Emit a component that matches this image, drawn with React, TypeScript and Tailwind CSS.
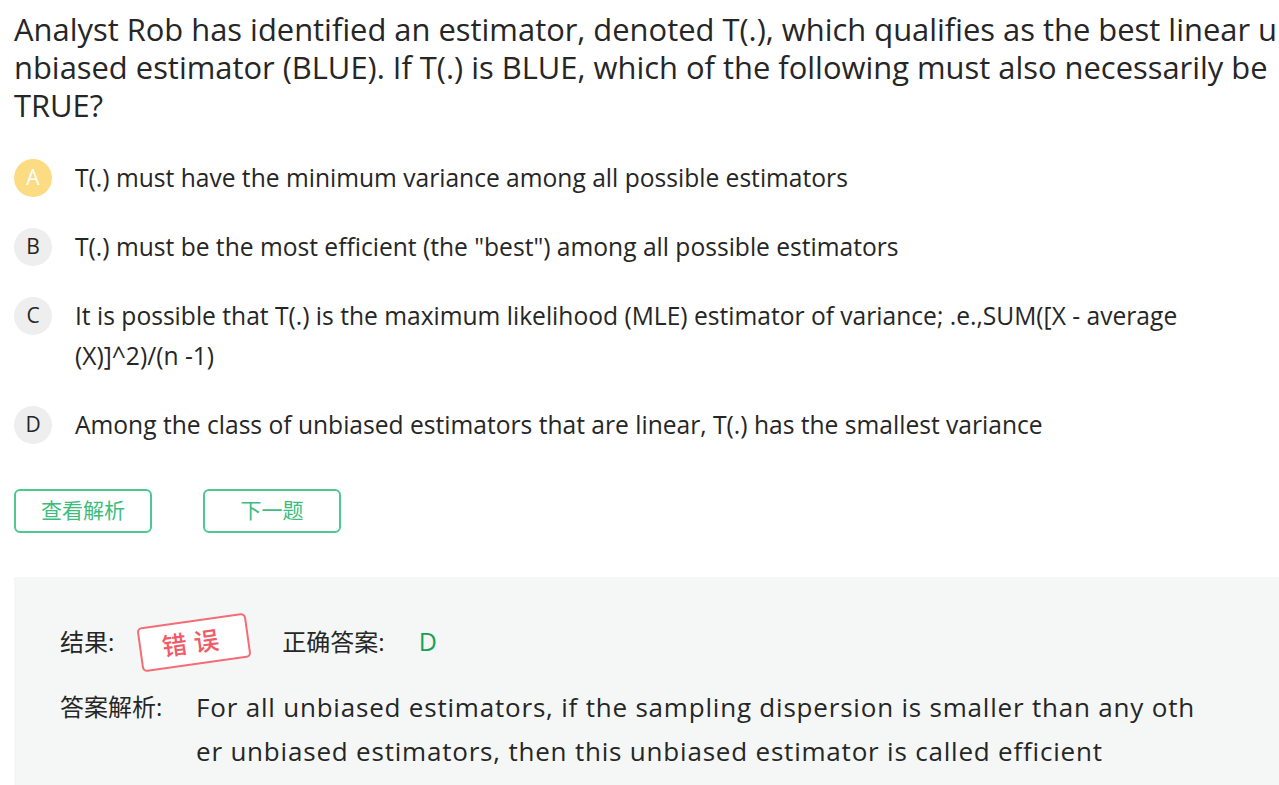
import React from 'react';

type Option = { key: string; text: string };

const options: Option[] = [
  { key: 'A', text: 'T(.) must have the minimum variance among all possible estimators' },
  { key: 'B', text: 'T(.) must be the most efficient (the "best") among all possible estimators' },
  {
    key: 'C',
    text: 'It is possible that T(.) is the maximum likelihood (MLE) estimator of variance; .e.,SUM([X - average (X)]^2)/(n -1)',
  },
  { key: 'D', text: 'Among the class of unbiased estimators that are linear, T(.) has the smallest variance' },
];

const selected = 'A';

const App: React.FC = () => {
  return (
    <div
      className="min-h-screen bg-white pl-[14px] text-[#262626] overflow-hidden"
      style={{ fontFamily: '"Open Sans", "Noto Sans CJK SC", sans-serif' }}
    >
      {/* Question */}
      <h1 className="pt-[10px] text-[30.9px] leading-[38px] font-normal break-all">
        Analyst Rob has identified an estimator, denoted T(.), which qualifies as the best linear unbiased
        estimator (BLUE). If T(.) is BLUE, which of the following must also necessarily be TRUE?
      </h1>

      {/* Options */}
      <ul className="mt-[34px] flex flex-col gap-[29px]">
        {options.map((opt) => (
          <li key={opt.key} className="flex items-start">
            <span
              className={`mt-px flex h-[38px] w-[38px] shrink-0 items-center justify-center rounded-full text-[21px] ${
                opt.key === selected ? 'bg-[#fcdc83] text-white' : 'bg-[#eeeeee] text-[#262626]'
              }`}
            >
              {opt.key}
            </span>
            <p className="ml-[23px] pr-[80px] text-[24.6px] leading-[40px]">{opt.text}</p>
          </li>
        ))}
      </ul>

      {/* Actions */}
      <div className="mt-[44px] flex gap-[51px]">
        <button className="h-[44px] w-[138px] rounded-[6px] border-2 border-[#4cc98f] text-[21px] text-[#3dbd7d]">
          查看解析
        </button>
        <button className="h-[44px] w-[138px] rounded-[6px] border-2 border-[#4cc98f] text-[21px] text-[#3dbd7d]">
          下一题
        </button>
      </div>

      {/* Result panel */}
      <section className="mt-[44px] bg-[#f4f7f6] pl-[46px] pr-[80px] pt-[30px] pb-[24px]">
        <div className="flex h-[70px] items-center">
          <span className="text-[24px]">结果:</span>
          <span className="ml-[25px] flex h-[45px] w-[110px] -rotate-[8deg] items-center justify-center rounded-[5px] border-2 border-[#f46d76] bg-white text-[25px] font-medium tracking-[7px] text-[#f25a66]">
            错误
          </span>
          <span className="ml-[33px] text-[24px]">正确答案:</span>
          <span className="ml-[34px] text-[25px] text-[#18a058]">D</span>
        </div>
        <div className="mt-[8px] flex">
          <span className="w-[136px] shrink-0 text-[24px] leading-[44px]">答案解析:</span>
          <p className="text-[26px] leading-[44px] tracking-[0.8px] break-all">
            For all unbiased estimators, if the sampling dispersion is smaller than any other unbiased estimators,
            then this unbiased estimator is called efficient
          </p>
        </div>
      </section>
    </div>
  );
};

export default App;
